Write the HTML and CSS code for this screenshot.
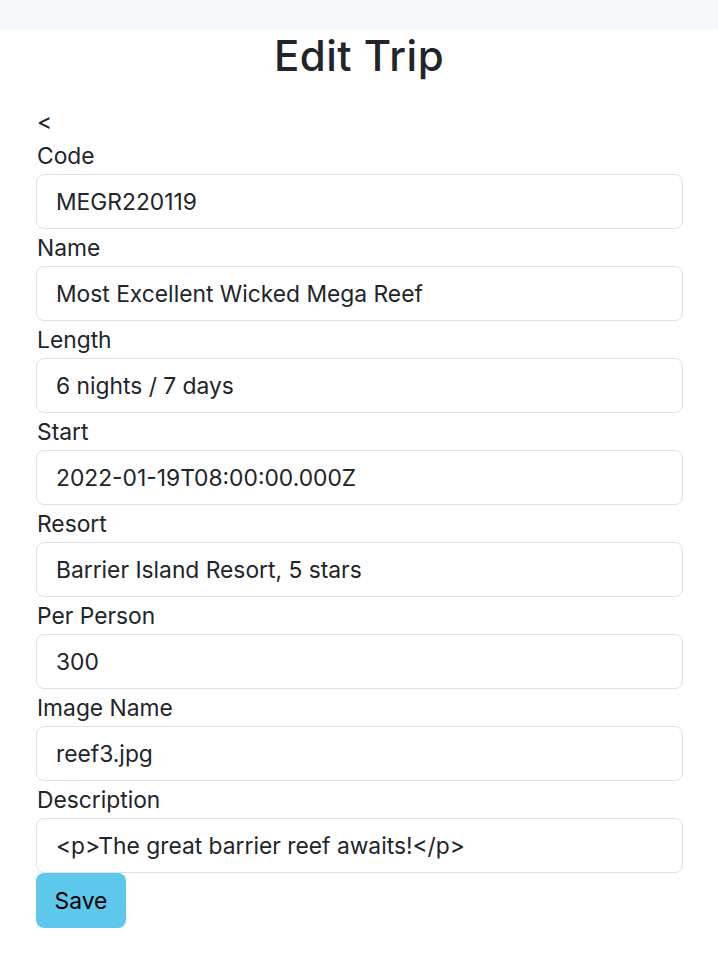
FILE: index.html
```html
<!DOCTYPE html>
<html lang="en">
<head>
<meta charset="utf-8">
<title>Edit Trip</title>
<link rel="stylesheet" href="styles.css">
</head>
<body>
<div class="topbar"></div>
<h1 class="title">Edit Trip</h1>
<main class="page">
  <a class="back" href="#">&lt;</a>
  <form class="form">
    <div class="field">
      <label class="label" for="code">Code</label>
      <input class="input" id="code" type="text" value="MEGR220119">
    </div>
    <div class="field">
      <label class="label" for="name">Name</label>
      <input class="input" id="name" type="text" value="Most Excellent Wicked Mega Reef">
    </div>
    <div class="field">
      <label class="label" for="length">Length</label>
      <input class="input" id="length" type="text" value="6 nights / 7 days">
    </div>
    <div class="field">
      <label class="label" for="start">Start</label>
      <input class="input" id="start" type="text" value="2022-01-19T08:00:00.000Z">
    </div>
    <div class="field">
      <label class="label" for="resort">Resort</label>
      <input class="input" id="resort" type="text" value="Barrier Island Resort, 5 stars">
    </div>
    <div class="field">
      <label class="label" for="perPerson">Per Person</label>
      <input class="input" id="perPerson" type="text" value="300">
    </div>
    <div class="field">
      <label class="label" for="image">Image Name</label>
      <input class="input" id="image" type="text" value="reef3.jpg">
    </div>
    <div class="field">
      <label class="label" for="description">Description</label>
      <input class="input" id="description" type="text" value="<p>The great barrier reef awaits!</p>">
    </div>
    <button class="save" type="button">Save</button>
  </form>
</main>
</body>
</html>
```
FILE: styles.css
```css
html, body {
  margin: 0;
  padding: 0;
  background: #ffffff;
  color: #212529;
  font-family: Inter, "Liberation Sans", Arial, sans-serif;
}

.topbar {
  height: 30px;
  background: #f8f9fa;
}

.title {
  margin: 2px 0 0;
  text-align: center;
  font-size: 42px;
  line-height: 48px;
  font-weight: 500;
  letter-spacing: 0.5px;
}

.page {
  padding: 27px 35px 0 36px;
}

.back {
  display: block;
  font-size: 22.8px;
  line-height: 30px;
  color: #212529;
  text-decoration: none;
  padding-left: 1px;
}

.form {
  display: flex;
  flex-direction: column;
}

.field {
  display: flex;
  flex-direction: column;
  padding-top: 4px;
}

.label {
  font-size: 22.8px;
  line-height: 30px;
  margin-bottom: 3px;
  padding-left: 1px;
}

.input {
  box-sizing: border-box;
  height: 55px;
  width: 100%;
  margin: 0;
  padding: 0 19px;
  border: 1px solid #dee2e6;
  border-radius: 8px;
  font-family: inherit;
  font-size: 22.8px;
  color: #212529;
  background: #fff;
  outline: none;
}

.save {
  align-self: flex-start;
  box-sizing: border-box;
  height: 55px;
  width: 90px;
  margin: 0;
  padding: 0;
  border: none;
  border-radius: 8px;
  background: #5dc8ec;
  color: #000;
  font-family: inherit;
  font-size: 22.8px;
  cursor: pointer;
}
```
